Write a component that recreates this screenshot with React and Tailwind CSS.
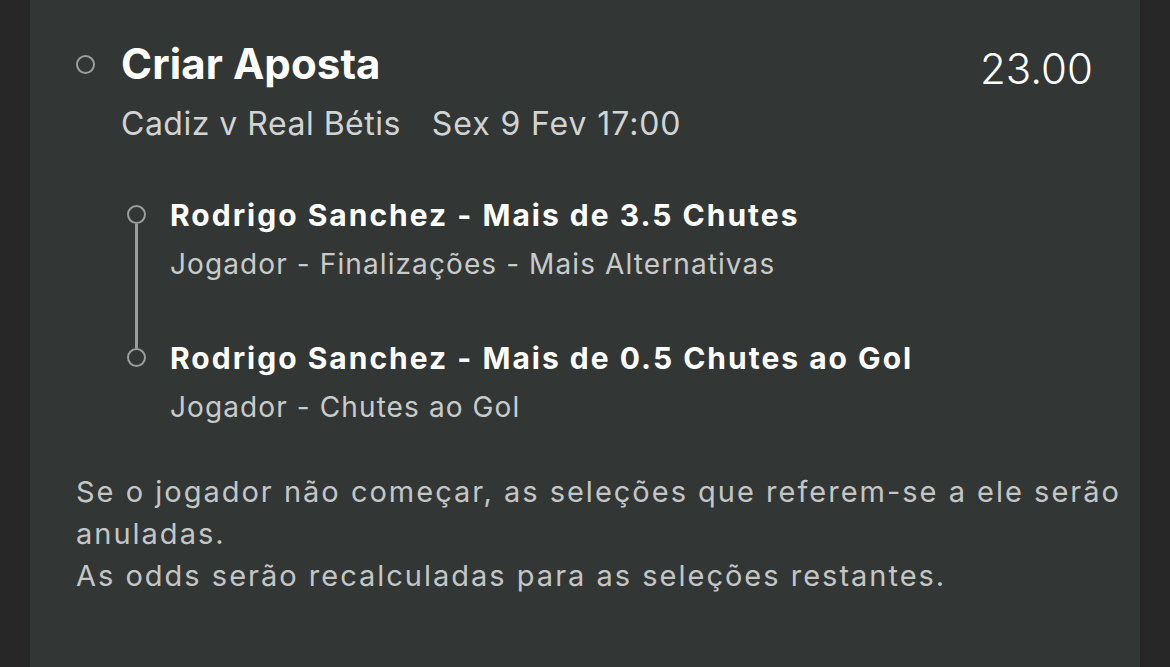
const selections = [
  {
    title: "Rodrigo Sanchez - Mais de 3.5 Chutes",
    market: "Jogador - Finalizações - Mais Alternativas",
  },
  {
    title: "Rodrigo Sanchez - Mais de 0.5 Chutes ao Gol",
    market: "Jogador - Chutes ao Gol",
  },
];

const Circle = () => (
  <div className="w-[19px] h-[19px] shrink-0 rounded-full border-[2.5px] border-[#9c9e9d]" />
);

const App = () => {
  return (
    <div
      className="w-[1170px] h-[667px] bg-[#272727] flex overflow-hidden"
      style={{ fontFamily: "Inter, 'Noto Sans', sans-serif" }}
    >
      <div className="ml-[30px] w-[1110px] h-full bg-[#323736] pl-[46px] pr-[16px] pt-[40px]">
        {/* Header */}
        <div className="flex items-start justify-between pr-[31px]">
          <div>
            <div className="flex items-center gap-[26px]">
              <Circle />
              <h1 className="text-[42px] leading-[48px] font-bold text-white tracking-[0.1px]">
                Criar Aposta
              </h1>
            </div>
            <p className="mt-[18px] ml-[45px] text-[32px] leading-[36px] text-[#d2d4d3] tracking-[0.5px]">
              Cadiz v Real Bétis
              <span className="ml-[31px] tracking-[0.9px]">Sex 9 Fev 17:00</span>
            </p>
          </div>
          <div className="mt-[5px] text-[42px] leading-[48px] font-light text-white">
            23.00
          </div>
        </div>

        {/* Selections */}
        <div className="mt-[55px] ml-[51px]">
          {selections.map((sel, i) => (
            <div key={sel.title} className="flex">
              <div className="w-[19px] flex flex-col items-center">
                <div
                  className={`w-[2.5px] h-[8px] ${i === 0 ? "" : "bg-[#9c9e9d]"}`}
                />
                <Circle />
                {i < selections.length - 1 && (
                  <div className="w-[2.5px] flex-1 bg-[#9c9e9d]" />
                )}
              </div>
              <div className={`ml-[24px] ${i < selections.length - 1 ? "pb-[58px]" : ""}`}>
                <div className="text-[30px] leading-[36px] font-bold text-white tracking-[2px]">
                  {sel.title}
                </div>
                <div className="mt-[13px] text-[28px] leading-[36px] text-[#c9cbca] tracking-[1.1px]">
                  {sel.market}
                </div>
              </div>
            </div>
          ))}
        </div>

        {/* Notes */}
        <div className="mt-[46px] text-[29px] leading-[42px] text-[#c4c6c5] tracking-[2px]">
          <p>
            Se o jogador não começar, as seleções que referem-se a ele serão
            anuladas.
          </p>
          <p>As odds serão recalculadas para as seleções restantes.</p>
        </div>
      </div>
    </div>
  );
};

export default App;
